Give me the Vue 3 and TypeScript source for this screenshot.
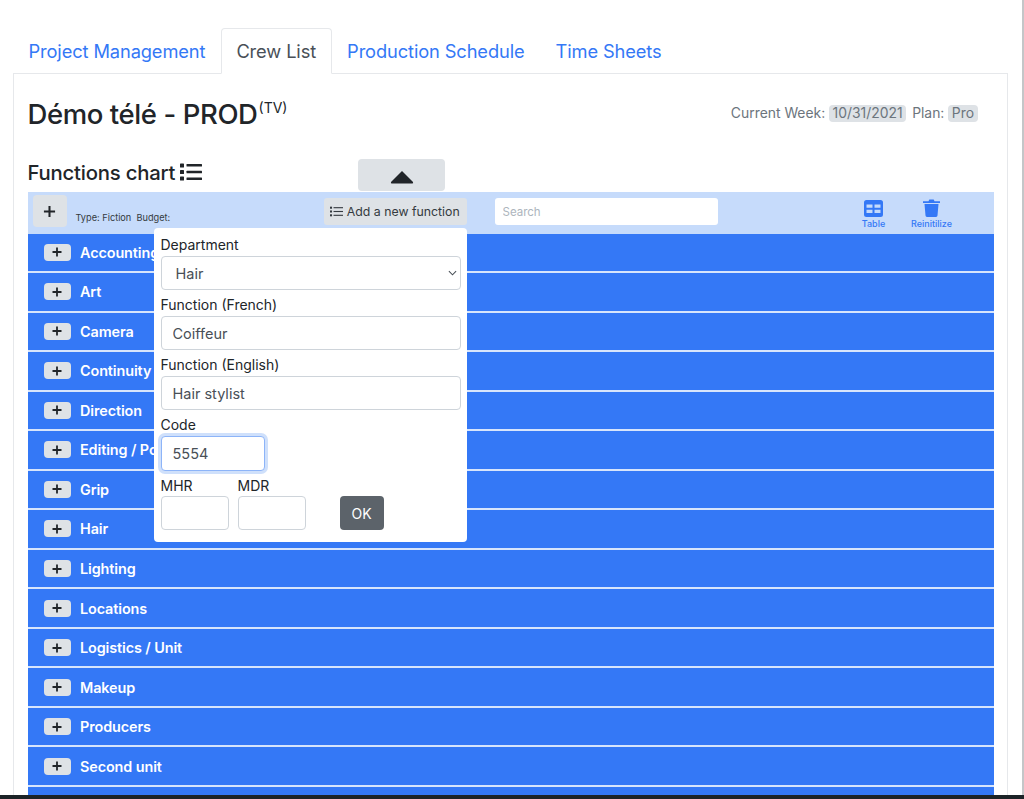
<script setup lang="ts">
const tabs: { label: string; active?: boolean }[] = [
  { label: 'Project Management' },
  { label: 'Crew List', active: true },
  { label: 'Production Schedule' },
  { label: 'Time Sheets' },
]
const departments: string[] = [
  'Accounting', 'Art', 'Camera', 'Continuity', 'Direction', 'Editing / Post-production', 'Grip', 'Hair',
  'Lighting', 'Locations', 'Logistics / Unit', 'Makeup', 'Producers', 'Second unit',
]
</script>

<template>
  <div class="page">
    <nav class="tabs">
      <a v-for="t in tabs" :key="t.label" class="tab" :class="{ active: t.active }">{{ t.label }}</a>
    </nav>
    <main class="card">
      <header class="title-row">
        <h1>Démo télé - PROD<sup>(TV)</sup></h1>
        <div class="meta">
          Current Week: <span class="badge">10/31/2021</span>
          <span class="plan">Plan:</span> <span class="badge">Pro</span>
        </div>
      </header>

      <div class="chart-head">
        <h2>Functions chart</h2>
        <svg class="list-lg" viewBox="0 0 22 18" aria-hidden="true">
          <rect x="0" y="0.5" width="4" height="4" rx="0.6" />
          <rect x="0" y="7" width="4" height="4" rx="0.6" />
          <rect x="0" y="13.5" width="4" height="4" rx="0.6" />
          <rect x="6.5" y="1" width="15.5" height="2.6" rx="0.5" />
          <rect x="6.5" y="7.7" width="15.5" height="2.6" rx="0.5" />
          <rect x="6.5" y="14.4" width="15.5" height="2.6" rx="0.5" />
        </svg>
        <button class="collapse" type="button" aria-label="Collapse">
          <svg viewBox="0 0 24 14" aria-hidden="true">
            <path d="M12 1 L23 12 Q23.6 13.5 22 13.5 L2 13.5 Q0.4 13.5 1 12 Z" />
          </svg>
        </button>
      </div>

      <div class="chart">
        <div class="toolbar">
          <button class="plus-lg" type="button" aria-label="Expand">
            <svg viewBox="0 0 14 14" aria-hidden="true"><path d="M7 1v12M1 7h12" /></svg>
          </button>
          <span class="info">Type: Fiction&nbsp;&nbsp;Budget:</span>
          <button class="add" type="button">
            <svg viewBox="0 0 14 11" aria-hidden="true">
              <rect x="0" y="0.3" width="2.2" height="2.2" />
              <rect x="0" y="4.4" width="2.2" height="2.2" />
              <rect x="0" y="8.5" width="2.2" height="2.2" />
              <rect x="3.8" y="0.8" width="10.2" height="1.2" />
              <rect x="3.8" y="4.9" width="10.2" height="1.2" />
              <rect x="3.8" y="9" width="10.2" height="1.2" />
            </svg>
            Add a new function
          </button>
          <input class="search" type="text" placeholder="Search" />
          <div class="tool table-tool">
            <svg viewBox="0 0 19 17" aria-hidden="true">
              <path fill-rule="evenodd" d="M2.5 0h14A2.5 2.5 0 0 1 19 2.500v12a2.500 2.500 0 0 1-2.500 2.500h-14A2.500 2.500 0 0 1 0 14.500v-12A2.500 2.500 0 0 1 2.500 0ZM2.500 4.500v3.300h6v-3.300ZM10.500 4.500v3.300h6v-3.300ZM2.500 9.800v3.300h6v-3.300ZM10.500 9.800v3.300h6v-3.300Z" />
            </svg>
            <span>Table</span>
          </div>
          <div class="tool trash-tool">
            <svg viewBox="0 0 17 18" aria-hidden="true">
              <path d="M0 2.200h5.500L6.300 .6h4.400l.8 1.600H17v1.900H0ZM1.500 5h14l-1 11.600A1.500 1.500 0 0 1 13 18H4a1.500 1.500 0 0 1-1.500-1.400Z" />
            </svg>
            <span>Reinitilize</span>
          </div>
        </div>

        <div class="rows">
          <div v-for="d in departments" :key="d" class="row">
            <button class="plus-sm" type="button" aria-label="Expand">
              <svg viewBox="0 0 10 10" aria-hidden="true"><path d="M5 .5v9M.5 5h9" /></svg>
            </button>
            <span class="row-name">{{ d }}</span>
          </div>
          <div class="row"></div>
        </div>

        <form class="popup" @submit.prevent>
          <label class="field">
            <span>Department</span>
            <span class="select-wrap">
              <select class="control select"><option>Hair</option></select>
              <svg viewBox="0 0 10 6" aria-hidden="true"><path d="M1 1l4 4 4-4" /></svg>
            </span>
          </label>
          <label class="field">
            <span>Function (French)</span>
            <input class="control" type="text" value="Coiffeur" />
          </label>
          <label class="field">
            <span>Function (English)</span>
            <input class="control" type="text" value="Hair stylist" />
          </label>
          <label class="field">
            <span>Code</span>
            <input class="control code" type="text" value="5554" />
          </label>
          <div class="rates">
            <label class="field small"><span>MHR</span><input class="control" type="text" /></label>
            <label class="field small"><span>MDR</span><input class="control" type="text" /></label>
            <button class="ok" type="submit">OK</button>
          </div>
        </form>
      </div>
    </main>
    <div class="edge"></div>
    <div class="dock"></div>
  </div>
</template>

<style>
html, body { margin: 0; height: 799px; overflow: hidden; background: #fff; }
</style>

<style scoped>
.page {
  height: 799px;
  overflow: hidden;
  box-sizing: border-box;
  padding: 28px 16px 0 13px;
  font-family: Inter, "Liberation Sans", sans-serif;
  color: #212529;
  background: #fff;
}
.tabs { display: flex; height: 45px; position: relative; z-index: 1; }
.tab {
  box-sizing: border-box;
  height: 46px;
  padding: 0 14.500px;
  border: 1px solid transparent;
  border-radius: 4px 4px 0 0;
  font-size: 18.300px;
  line-height: 45px;
  color: #3478f6;
  letter-spacing: -0.12px;
  white-space: nowrap;
}
.tab.active { color: #495057; border-color: #e6e8eb #e6e8eb #fff; background: #fff; }
.card {
  box-sizing: border-box;
  height: 760px;
  border: 1px solid #e6e8eb;
  padding: 0 13.500px;
}
.title-row { display: flex; justify-content: space-between; height: 85px; }
h1 {
  margin: 22px 0 0;
  font-size: 27.500px;
  line-height: 36px;
  font-weight: 500;
  letter-spacing: -0.4px;
  white-space: nowrap;
}
sup { font-size: 14px; font-weight: 400; line-height: 0; vertical-align: 11px; letter-spacing: 0; margin-left: 1px; }
.meta {
  margin: 30px 16px 0 0;
  font-size: 13.900px;
  line-height: 18px;
  color: #6c757d;
  white-space: nowrap;
}
.plan { margin-left: 6px; }
.badge { display: inline-block; padding: 0 3.500px; line-height: 17px; border-radius: 4px; background: #dee2e6; }
.chart-head { display: flex; align-items: flex-start; height: 33px; }
h2 { margin: 0; font-size: 20.300px; line-height: 28px; font-weight: 500; letter-spacing: -0.2px; white-space: nowrap; }
.list-lg { width: 22px; height: 18px; margin: 4px 0 0 5px; fill: #212529; }
.collapse {
  width: 87px;
  height: 32px;
  margin-left: 156px;
  padding: 0;
  border: 0;
  border-radius: 4px;
  background: #dee2e6;
  display: flex;
  align-items: center;
  justify-content: center;
}
.collapse svg { width: 24px; height: 14px; fill: #212529; margin-top: 4px; }
.chart { position: relative; width: 966px; }
.toolbar {
  position: relative;
  height: 41.500px;
  box-sizing: border-box;
  padding-left: 5px;
  display: flex;
  align-items: flex-start;
  background: #c6dbfb;
}
.plus-lg {
  width: 34px;
  height: 32px;
  margin-top: 3px;
  padding: 0;
  border: 0;
  border-radius: 4px;
  background: #dee2e6;
  display: flex;
  align-items: center;
  justify-content: center;
}
.plus-lg svg { width: 13px; height: 13px; fill: none; stroke: #212529; stroke-width: 2.200; }
.info { margin: 20px 0 0 9px; font-size: 9.200px; line-height: 11px; color: #343a40; white-space: nowrap; width: 248px; }
.add {
  box-sizing: border-box;
  width: 143px;
  height: 27px;
  margin-top: 6px;
  padding: 0;
  border: 0;
  border-radius: 3px;
  background: #dee2e6;
  color: #343a40;
  font: 400 12.300px Inter, "Liberation Sans", sans-serif;
  display: flex;
  align-items: center;
  justify-content: center;
  gap: 3.500px;
  white-space: nowrap;
}
.add svg { width: 13px; height: 11px; fill: #343a40; }
.search {
  box-sizing: border-box;
  width: 223px;
  height: 27px;
  margin: 6px 0 0 28px;
  padding: 0 8px;
  border: 0;
  border-radius: 3px;
  background: #fff;
  font: 400 11.500px Inter, "Liberation Sans", sans-serif;
  outline: none;
}
.search::placeholder { color: #adb5bd; opacity: 1; }
.tool { display: flex; flex-direction: column; align-items: center; color: #3478f6; font-size: 9px; font-weight: 500; white-space: nowrap; }
.tool svg { fill: #3478f6; display: block; }
.tool span { line-height: 11px; margin-top: 0.500px; }
.table-tool { width: 24px; margin: 8px 0 0 144px; }
.table-tool svg { width: 19px; height: 17px; }
.trash-tool { width: 44px; margin: 7px 0 0 24px; }
.trash-tool svg { width: 17px; height: 18px; }
.rows { display: flex; flex-direction: column; gap: 2px; background: #d7e5fc; }
.row {
  flex: none;
  box-sizing: border-box;
  height: 37.540px;
  display: flex;
  align-items: center;
  padding-left: 16px;
  background: #3478f6;
  color: #fff;
}
.plus-sm {
  width: 27px;
  height: 17px;
  padding: 0;
  border: 0;
  border-radius: 4px;
  background: #dee2e6;
  display: flex;
  align-items: center;
  justify-content: center;
}
.plus-sm svg { width: 10px; height: 10px; fill: none; stroke: #212529; stroke-width: 1.800; }
.row-name { margin-left: 9.500px; font-size: 14.400px; font-weight: 600; letter-spacing: -0.1px; white-space: nowrap; }
.popup {
  position: absolute;
  left: 126.500px;
  top: 36px;
  box-sizing: border-box;
  width: 313px;
  height: 314px;
  padding: 5px 6px 0 6.500px;
  background: #fff;
  border-radius: 4px;
  display: flex;
  flex-direction: column;
  gap: 3px;
  font-size: 14px;
}
.field { display: flex; flex-direction: column; }
.field > span:first-child { line-height: 24px; height: 23px; }
.field.small > span:first-child { line-height: 26px; }
.control {
  box-sizing: border-box;
  width: 300px;
  height: 34px;
  padding: 0 11px;
  border: 1px solid #ced4da;
  border-radius: 4px;
  background: #fff;
  color: #495057;
  font: 400 14.500px Inter, "Liberation Sans", sans-serif;
  outline: none;
}
.select-wrap { position: relative; display: block; height: 34px; }
.select { appearance: none; padding-left: 14px; }
.select-wrap svg { position: absolute; right: 4px; top: 14px; width: 9px; height: 6px; fill: none; stroke: #495057; stroke-width: 1.200; }
.code { width: 104px; height: 35px; border-color: #8db4f8; box-shadow: 0 0 0 3px #cfe0fb; }
.rates { display: flex; align-items: flex-end; gap: 9px; margin-top: -1px; }
.field.small { width: 68px; }
.field.small .control { width: 68px; }
.ok {
  width: 44px;
  height: 34px;
  margin-left: 25px;
  padding: 0;
  border: 0;
  border-radius: 4px;
  background: #5c636a;
  color: #fff;
  font: 400 14px Inter, "Liberation Sans", sans-serif;
}
.edge { position: fixed; top: 0; right: 0; bottom: 0; width: 2px; background: #c4c6c8; }
.dock { position: fixed; left: 0; right: 0; bottom: 0; height: 4px; background: #1c2327; }
</style>
